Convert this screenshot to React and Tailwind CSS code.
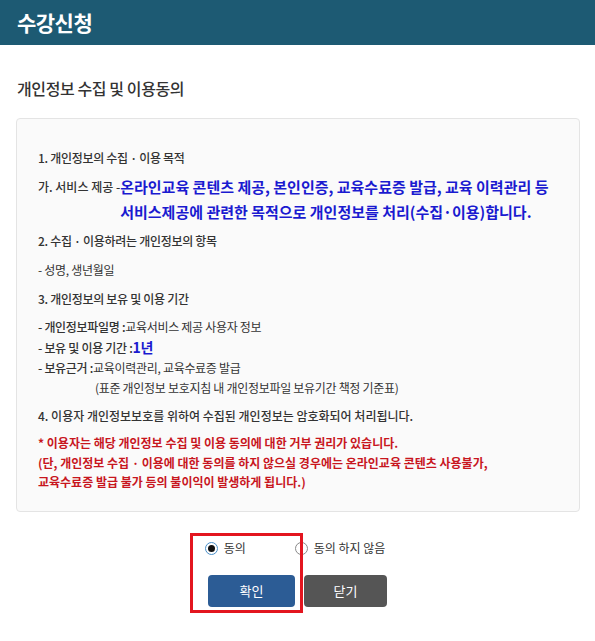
const font = { fontFamily: '"Noto Sans CJK KR", "Noto Sans", sans-serif' };

const Radio = ({ checked, label }) => (
  <label className="flex items-center gap-[6px] text-[12px] text-[#333]">
    {checked ? (
      <span className="w-[13px] h-[13px] rounded-full border border-[#4a8fc9] bg-white flex items-center justify-center">
        <span className="w-[7px] h-[7px] rounded-full bg-[#111]" />
      </span>
    ) : (
      <span className="w-[13px] h-[13px] rounded-full border border-[#8a8a8a] bg-white" />
    )}
    <span>{label}</span>
  </label>
);

export default function App() {
  return (
    <div className="w-[595px] h-[641px] bg-white relative overflow-hidden" style={font}>
      {/* Header */}
      <div className="h-[45px] bg-[#1d5a73] flex items-center px-[17px]">
        <h1 className="text-white text-[21px] font-bold tracking-tight">수강신청</h1>
      </div>

      <h2 className="mt-[32px] ml-[17px] text-[16px] leading-[22px] font-medium text-[#333] tracking-tight">
        개인정보 수집 및 이용동의
      </h2>

      {/* Agreement box */}
      <div className="mt-[19px] mx-[16px] w-[564px] h-[394px] border border-[#e4e4e4] rounded-[4px] bg-[#fafafa] pl-[21px] pt-[29px] text-[12px] text-[#333]">
        <p className="leading-[20px] font-medium tracking-tight">1. 개인정보의 수집 · 이용 목적</p>

        <div className="mt-[6px] flex">
          <span className="text-[12px] leading-[25px] font-medium whitespace-nowrap">가. 서비스 제공 -</span>
          <p className="text-[15px] leading-[25px] font-bold text-[#1a1ad0]">
            온라인교육 콘텐츠 제공, 본인인증, 교육수료증 발급, 교육 이력관리 등
            <br />
            서비스제공에 관련한 목적으로 개인정보를 처리(수집·이용)합니다.
          </p>
        </div>

        <p className="mt-[7px] leading-[20px] font-medium tracking-tight">2. 수집 · 이용하려는 개인정보의 항목</p>
        <p className="mt-[9px] leading-[20px] tracking-tight">- 성명, 생년월일</p>
        <p className="mt-[9px] leading-[20px] font-medium tracking-tight">3. 개인정보의 보유 및 이용 기간</p>

        <div className="mt-[8px] leading-[20px] tracking-tight">
          <p>
            <span className="font-medium">- 개인정보파일명 :</span>교육서비스 제공 사용자 정보
          </p>
          <p>
            <span className="font-medium">- 보유 및 이용 기간 :</span>
            <span className="text-[14px] font-bold text-[#1a1ad0]">1년</span>
          </p>
          <p>
            <span className="font-medium">- 보유근거 :</span>교육이력관리, 교육수료증 발급
          </p>
          <p className="pl-[57px]">(표준 개인정보 보호지침 내 개인정보파일 보유기간 책정 기준표)</p>
        </div>

        <p className="mt-[8px] leading-[20px] font-medium">
          4. 이용자 개인정보보호를 위하여 수집된 개인정보는 암호화되어 처리됩니다.
        </p>

        <div className="mt-[7px] leading-[19.5px] font-bold text-[#c8161e]">
          <p>* 이용자는 해당 개인정보 수집 및 이용 동의에 대한 거부 권리가 있습니다.</p>
          <p>(단, 개인정보 수집 · 이용에 대한 동의를 하지 않으실 경우에는 온라인교육 콘텐츠 사용불가,</p>
          <p>교육수료증 발급 불가 등의 불이익이 발생하게 됩니다.)</p>
        </div>
      </div>

      {/* Consent radios */}
      <div className="mt-[27px] flex justify-center gap-[49px] pr-[5px]">
        <Radio checked label="동의" />
        <Radio label="동의 하지 않음" />
      </div>

      {/* Buttons */}
      <div className="mt-[18px] flex justify-center gap-[9px]">
        <button className="w-[87px] h-[32px] rounded-[4px] bg-[#2c5c95] text-white text-[13px]">확인</button>
        <button className="w-[83px] h-[32px] rounded-[4px] bg-[#555555] text-white text-[13px]">닫기</button>
      </div>

      {/* Highlight annotation */}
      <div className="absolute left-[190px] top-[533px] w-[113px] h-[80px] border-[3px] border-[#e3151f] pointer-events-none" />
    </div>
  );
}
